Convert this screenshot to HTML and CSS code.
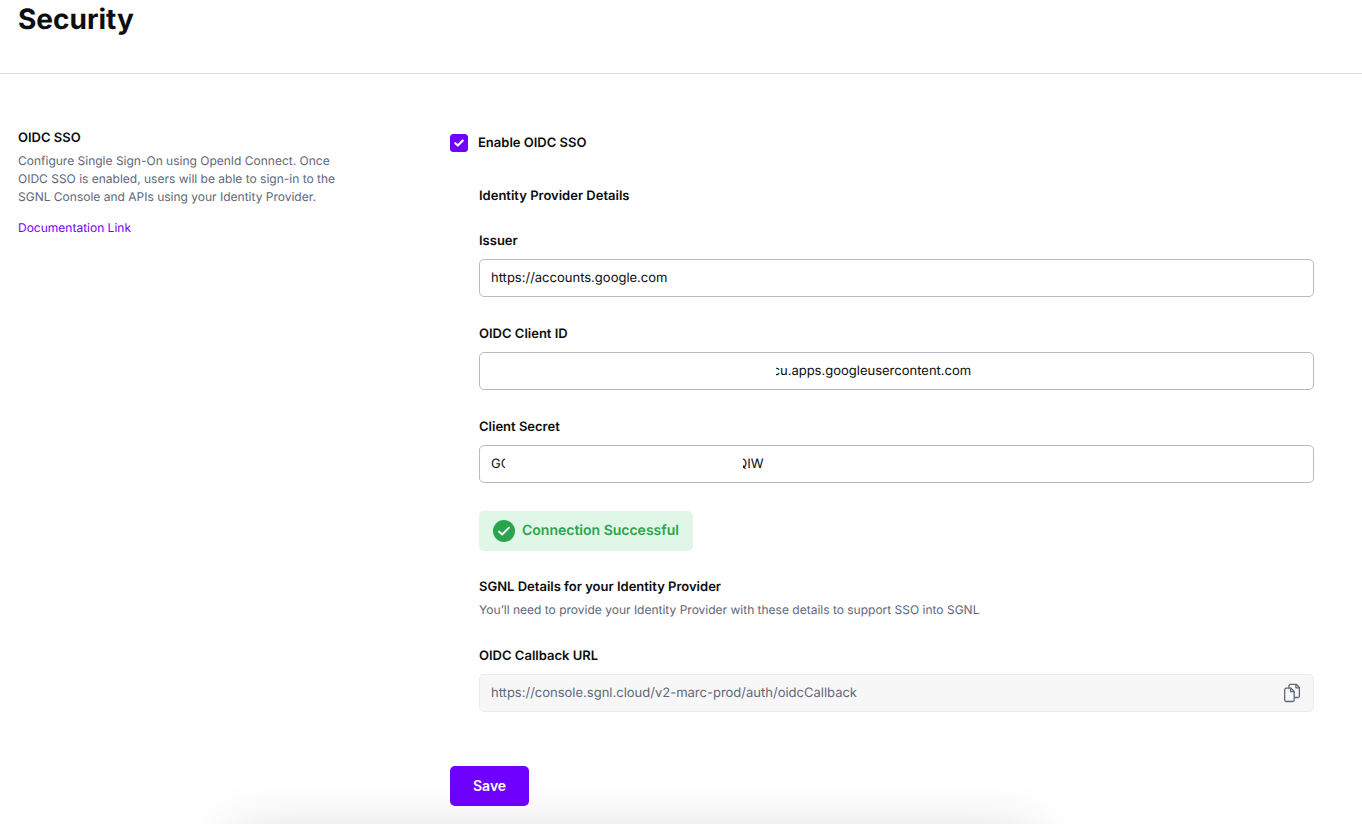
FILE: index.html
```html
<!DOCTYPE html>
<html lang="en">
<head>
<meta charset="utf-8">
<meta name="viewport" content="width=device-width, initial-scale=1">
<title>Security</title>
<link rel="stylesheet" href="styles.css">
</head>
<body>
<header class="page-header">
  <h1 class="page-title">Security</h1>
</header>
<main class="settings">
  <section class="intro">
    <h2 class="heading">OIDC SSO</h2>
    <p class="description">Configure Single Sign-On using OpenId Connect. Once OIDC SSO is enabled, users will be able to sign-in to the SGNL Console and APIs using your Identity Provider.</p>
    <a class="doc-link" href="#docs">Documentation Link</a>
  </section>
  <form class="form">
    <div class="toggle">
      <span class="check">
        <input class="check-input" type="checkbox" id="enable" checked>
        <svg class="check-mark" viewBox="0 0 18 18" aria-hidden="true"><path d="M5.3 9.2 7.8 11.5 12.7 6.6" fill="none" stroke="#fff" stroke-width="2.2" stroke-linecap="round" stroke-linejoin="round"/></svg>
      </span>
      <label class="heading" for="enable">Enable OIDC SSO</label>
    </div>
    <div class="details">
      <h2 class="heading group-title">Identity Provider Details</h2>
      <div class="fields">
        <div class="field">
          <label class="heading" for="issuer">Issuer</label>
          <input class="text-input" id="issuer" type="text" value="https://accounts.google.com">
        </div>
        <div class="field">
          <label class="heading" for="client-id">OIDC Client ID</label>
          <div class="input-wrap">
            <input class="text-input" id="client-id" type="text" value="                                                                             cu.apps.googleusercontent.com">
            <span class="redaction redaction-id"></span>
          </div>
        </div>
        <div class="field">
          <label class="heading" for="secret">Client Secret</label>
          <div class="input-wrap">
            <input class="text-input" id="secret" type="text" value="GO                                                              QIW">
            <span class="redaction redaction-secret"></span>
          </div>
        </div>
      </div>
      <div class="banner" role="status">
        <svg class="banner-icon" viewBox="0 0 22 22" aria-hidden="true"><circle cx="11" cy="11" r="11" fill="#2ba44e"/><path d="M6 11.5 9.2 14.5 16 7.7" fill="none" stroke="#fff" stroke-width="1.8" stroke-linecap="round" stroke-linejoin="round"/></svg>
        Connection Successful
      </div>
      <h2 class="heading">SGNL Details for your Identity Provider</h2>
      <p class="description">You’ll need to provide your Identity Provider with these details to support SSO into SGNL</p>
      <div class="field callback">
        <label class="heading" for="callback">OIDC Callback URL</label>
        <div class="input-wrap">
          <input class="text-input readonly" id="callback" type="text" readonly value="https://console.sgnl.cloud/v2-marc-prod/auth/oidcCallback">
          <button class="copy" type="button" aria-label="Copy">
            <svg class="copy-icon" viewBox="0 0 18 20" fill="none" stroke="#5f6779" stroke-width="1.3" stroke-linejoin="round" aria-hidden="true"><path d="M2.7 5.2H8L11.2 8.4V17a1.5 1.5 0 0 1-1.5 1.5H3.2A1.5 1.5 0 0 1 1.7 17V6.7a1.5 1.5 0 0 1 1.5-1.5z"/><path d="M7.7 5.4V8.7H11"/><path d="M6 5V2.8A1.5 1.5 0 0 1 7.5 1.3H13.2L16.4 4.5V13a1.5 1.5 0 0 1-1.5 1.5H11.4"/><path d="M12.9 1.5V4.8H16.2"/></svg>
          </button>
        </div>
      </div>
    </div>
    <button class="save" type="button">Save</button>
  </form>
</main>
<div class="sheet"></div>
</body>
</html>
```
FILE: styles.css
```css
* {
  box-sizing: border-box;
}

body {
  margin: 0;
  background: #fff;
  color: #0c0d0f;
  font-family: Inter, "Liberation Sans", sans-serif;
  font-size: 13px;
  line-height: 20px;
  text-rendering: geometricPrecision;
}

h1, h2, p {
  margin: 0;
}

.page-header {
  padding: 0 18px 34px;
  border-bottom: 1px solid #d9d9dc;
}

.page-title {
  font-size: 28px;
  line-height: 39px;
  font-weight: 700;
}

.settings {
  display: grid;
  grid-template-columns: 1fr 2fr;
  padding: 54px 48px 18px 18px;
}

.intro {
  max-width: 328px;
}

.heading {
  font-size: 13px;
  line-height: 20px;
  font-weight: 600;
}

.description {
  margin-top: 4px;
  font-size: 12px;
  line-height: 18px;
  color: #5f6779;
}

.doc-link {
  display: inline-block;
  margin-top: 13px;
  font-size: 12px;
  line-height: 18px;
  color: #6f00ff;
  text-decoration: none;
}

.form {
  padding-top: 5px;
}

.toggle {
  display: flex;
  align-items: center;
  gap: 10px;
}

.check {
  position: relative;
  display: flex;
}

.check-input {
  appearance: none;
  width: 18px;
  height: 18px;
  margin: 0;
  border-radius: 3px;
  border: 1px solid #babac4;
}

.check-input:checked {
  border-color: #6f00ff;
  background: #6f00ff;
}

.check-mark {
  position: absolute;
  inset: 0;
  pointer-events: none;
}

.details {
  padding-left: 29px;
}

.group-title {
  margin: 33px 0 25px;
}

.fields {
  display: grid;
  gap: 27px;
}

.field {
  display: grid;
  gap: 8px;
}

.input-wrap {
  position: relative;
}

.text-input {
  display: block;
  width: 100%;
  height: 38px;
  padding: 0 11px 1px;
  border: 1px solid #babac4;
  border-radius: 5px;
  background: #fff;
  color: #0c0d0f;
  font: inherit;
  text-rendering: inherit;
}

.readonly {
  border-color: #ebebed;
  background: #f7f7f7;
  color: #5f6779;
}

.redaction {
  position: absolute;
  top: 4px;
  bottom: 4px;
  background: #fff;
}

.redaction-id {
  left: 8px;
  width: 289px;
}

.redaction-secret {
  left: 26px;
  width: 238px;
}

.banner {
  display: flex;
  align-items: center;
  gap: 7px;
  width: fit-content;
  margin: 28px 0 26px;
  padding: 9px 14px;
  border-radius: 5px;
  background: #e0f7e7;
  color: #2ba44e;
  font-size: 14px;
  line-height: 22px;
  font-weight: 600;
}

.banner-icon {
  width: 22px;
  height: 22px;
}

.callback {
  margin-top: 27px;
}

.copy {
  position: absolute;
  top: 9px;
  right: 13px;
  padding: 0;
  border: 0;
  background: none;
}

.copy-icon {
  display: block;
  width: 18px;
  height: 20px;
}

.save {
  margin-top: 54px;
  padding: 9px 23px;
  border: 0;
  border-radius: 5px;
  background: #6f00ff;
  color: #fff;
  font: inherit;
  font-size: 14px;
  line-height: 22px;
  font-weight: 600;
}

.sheet {
  position: fixed;
  top: 100%;
  left: 17%;
  right: 24%;
  height: 60px;
  box-shadow: 0 10px 56px rgba(0, 0, 0, 0.16);
  pointer-events: none;
}
```
